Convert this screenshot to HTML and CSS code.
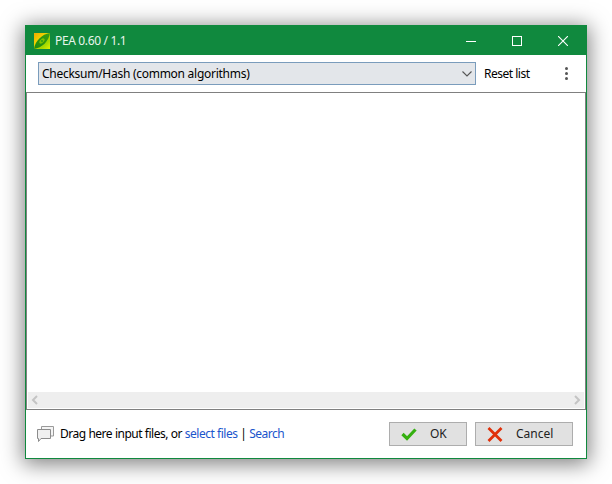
FILE: index.html
```html
<!DOCTYPE html>
<html lang="en">
<head>
<meta charset="utf-8">
<title>PEA</title>
<link rel="stylesheet" href="styles.css">
</head>
<body>
<div class="window">
  <header class="titlebar">
    <svg class="app-icon" width="16" height="16" viewBox="0 0 16 16">
      <defs>
        <linearGradient id="g" x1="0" y1="0" x2="1" y2="1"><stop offset="0" stop-color="#f0a800"/><stop offset=".35" stop-color="#f0d000"/><stop offset=".7" stop-color="#a0d800"/><stop offset="1" stop-color="#e4f000"/></linearGradient>
        <linearGradient id="p" x1="0" y1="1" x2="1" y2="0"><stop offset="0" stop-color="#1f8a10"/><stop offset="1" stop-color="#3aa010"/></linearGradient>
      </defs>
      <rect width="16" height="16" fill="url(#g)"/>
      <path d="M0 16C1 8 8 1 16 0C15 8 8 15 0 16Z" fill="url(#p)"/>
      <ellipse cx="8" cy="8" rx="3.200" ry="1.800" transform="rotate(-45 8 8)" fill="#7cc400"/>
      <circle cx="8" cy="8" r="1" fill="#2f9a1a"/>
    </svg>
    <span class="title">PEA 0.60 / 1.1</span>
    <div class="caption">
      <span class="cap-btn"><svg width="10" height="10" viewBox="0 0 10 10"><path d="M0 5.500H10" stroke="#fff"/></svg></span>
      <span class="cap-btn"><svg width="10" height="10" viewBox="0 0 10 10"><rect x=".5" y=".5" width="9" height="9" fill="none" stroke="#fff"/></svg></span>
      <span class="cap-btn"><svg width="10" height="10" viewBox="0 0 10 10"><path d="M0 0L10 10M10 0L0 10" stroke="#fff" stroke-width="1.100"/></svg></span>
    </div>
  </header>
  <div class="toolbar">
    <div class="combo">
      <span>Checksum/Hash (common algorithms)</span>
      <svg width="10" height="6" viewBox="0 0 10 6"><path d="M.5 .5L5 5L9.500 .5" fill="none" stroke="#555" stroke-width="1.100"/></svg>
    </div>
    <span class="reset">Reset list</span>
    <span class="dots"><i></i><i></i><i></i></span>
  </div>
  <main class="list">
    <div class="list-body"></div>
    <div class="hscroll">
      <svg width="8" height="10" viewBox="0 0 8 10"><path d="M6 1L2 5L6 9" fill="none" stroke="#c4c4c4" stroke-width="2"/></svg>
      <svg width="8" height="10" viewBox="0 0 8 10"><path d="M2 1L6 5L2 9" fill="none" stroke="#c4c4c4" stroke-width="2"/></svg>
    </div>
  </main>
  <footer class="footer">
    <svg class="drop" width="17" height="16" viewBox="0 0 17 16">
      <path d="M4.500 3V.5H16.500V10H14" fill="#f4f4f4" stroke="#9a9a9a"/>
      <path d="M.5 3.500H13.500V12.500H4L1.500 15.500V12.500H.5Z" fill="#f0f0f0" stroke="#8c8c8c"/>
    </svg>
    <p class="hint">Drag here input files, or <a>select files</a> | <a>Search</a></p>
    <button class="btn btn-ok">
      <svg width="16" height="14" viewBox="0 0 16 14"><path d="M1.500 7L6 11.500L14.500 2.500" fill="none" stroke="#35b010" stroke-width="3.200"/></svg>
      <span>OK</span>
    </button>
    <button class="btn btn-cancel">
      <svg width="16" height="15" viewBox="0 0 16 15"><path d="M1.500 1L14.500 14M14.500 1L1.500 14" fill="none" stroke="#e0300a" stroke-width="2.800"/></svg>
      <span>Cancel</span>
    </button>
  </footer>
</div>
</body>
</html>
```
FILE: styles.css
```css
* { box-sizing: border-box; }
html, body { margin: 0; height: 100%; background: #fff; }
body { padding: 25px; font: 12px/16px "Noto Sans", "Open Sans", sans-serif; overflow: hidden; }
.window {
  width: 562px; height: 434px;
  display: flex; flex-direction: column;
  background: #fff;
  border: 1px solid #10893e;
  box-shadow: 0 3px 20px 2px rgba(0,0,0,.5);
}
.titlebar {
  height: 29px; flex: none;
  display: flex; align-items: center;
  background: #10893e; color: #fff;
  padding-left: 8px;
}
.app-icon { flex: none; }
.title { margin-left: 5px; color: #e8f5ec; letter-spacing: -.35px; }
.caption { margin-left: auto; display: flex; }
.cap-btn { width: 46px; height: 29px; display: flex; align-items: center; justify-content: center; }
.toolbar {
  height: 37px; flex: none;
  display: flex; align-items: center;
  padding-left: 12px;
}
.combo {
  width: 438px; height: 23px;
  display: flex; align-items: center; justify-content: space-between;
  padding: 0 3px;
  background: #e3e6ea;
  border: 1px solid #7a9cbc;
  color: #000;
  letter-spacing: -.27px;
}
.reset { margin-left: 8px; color: #000; letter-spacing: -.5px; }
.dots { margin-left: 36px; display: flex; flex-direction: column; gap: 2px; }
.dots i { width: 3px; height: 3px; border-radius: 50%; background: #555; display: block; }
.list {
  flex: 1; display: flex; flex-direction: column;
  border: 1px solid #808080;
  min-height: 0;
}
.list-body { flex: 1; }
.hscroll {
  height: 16px; flex: none;
  margin: 0 1px 1px;
  display: flex; align-items: center; justify-content: space-between;
  padding: 0 3px;
  background: #eeeeee;
}
.footer {
  height: 48px; flex: none;
  display: flex; align-items: center;
  padding: 0 13px 0 11px;
}
.drop { flex: none; }
.hint { margin: 0 0 0 6px; color: #000; flex: 1; letter-spacing: -.5px; word-spacing: .2px; }
.hint a { color: #1a55cc; }
.btn {
  height: 24px; padding: 0;
  display: flex; align-items: center;
  background: #e1e1e1;
  border: 1px solid #adadad;
  font: inherit; color: #222;
}
.btn-ok { width: 78px; padding-left: 11px; }
.btn-ok span { margin-left: 13px; }
.btn-cancel { width: 98px; margin-left: 8px; padding-left: 11px; }
.btn-cancel span { margin-left: 13px; }
```
